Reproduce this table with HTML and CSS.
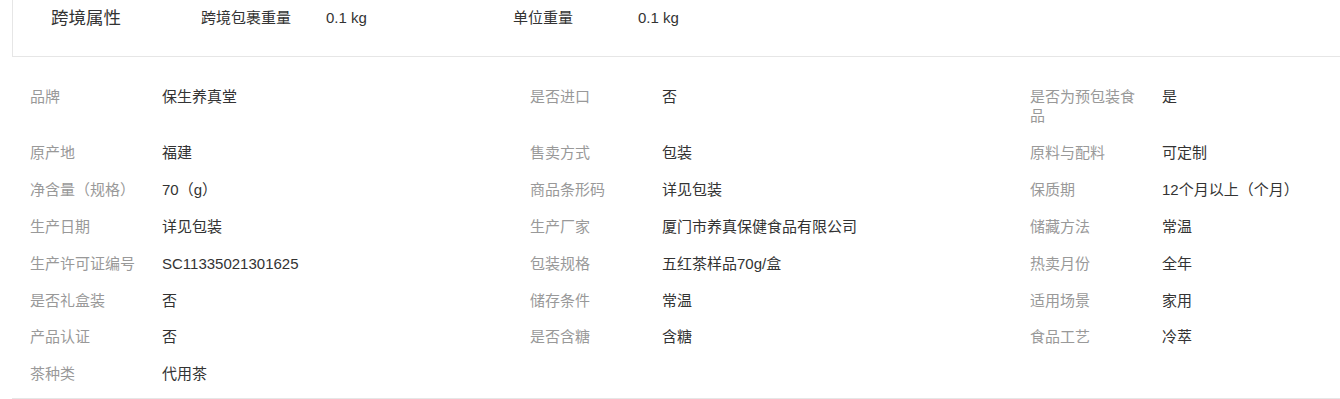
FILE: index.html
```html
<!DOCTYPE html>
<html lang="zh-CN">
<head>
<meta charset="utf-8">
<title>商品属性</title>
<link rel="stylesheet" href="styles.css">
</head>
<body>
<div class="page">
  <section class="cross">
    <div class="cross-title">跨境属性</div>
    <div class="cross-pair"><span class="cross-label">跨境包裹重量</span><span class="cross-value">0.1 kg</span></div>
    <div class="cross-pair"><span class="cross-label">单位重量</span><span class="cross-value">0.1 kg</span></div>
  </section>
  <section class="attrs">
    <div class="attr"><span class="label">品牌</span><span class="value">保生养真堂</span></div>
    <div class="attr"><span class="label">是否进口</span><span class="value">否</span></div>
    <div class="attr"><span class="label">是否为预包装食品</span><span class="value">是</span></div>

    <div class="attr"><span class="label">原产地</span><span class="value">福建</span></div>
    <div class="attr"><span class="label">售卖方式</span><span class="value">包装</span></div>
    <div class="attr"><span class="label">原料与配料</span><span class="value">可定制</span></div>

    <div class="attr"><span class="label">净含量（规格）</span><span class="value">70（g）</span></div>
    <div class="attr"><span class="label">商品条形码</span><span class="value">详见包装</span></div>
    <div class="attr"><span class="label">保质期</span><span class="value">12个月以上（个月）</span></div>

    <div class="attr"><span class="label">生产日期</span><span class="value">详见包装</span></div>
    <div class="attr"><span class="label">生产厂家</span><span class="value">厦门市养真保健食品有限公司</span></div>
    <div class="attr"><span class="label">储藏方法</span><span class="value">常温</span></div>

    <div class="attr"><span class="label">生产许可证编号</span><span class="value">SC11335021301625</span></div>
    <div class="attr"><span class="label">包装规格</span><span class="value">五红茶样品70g/盒</span></div>
    <div class="attr"><span class="label">热卖月份</span><span class="value">全年</span></div>

    <div class="attr"><span class="label">是否礼盒装</span><span class="value">否</span></div>
    <div class="attr"><span class="label">储存条件</span><span class="value">常温</span></div>
    <div class="attr"><span class="label">适用场景</span><span class="value">家用</span></div>

    <div class="attr"><span class="label">产品认证</span><span class="value">否</span></div>
    <div class="attr"><span class="label">是否含糖</span><span class="value">含糖</span></div>
    <div class="attr"><span class="label">食品工艺</span><span class="value">冷萃</span></div>

    <div class="attr"><span class="label">茶种类</span><span class="value">代用茶</span></div>
  </section>
</div>
</body>
</html>
```

FILE: styles.css
```css
html, body {
  margin: 0;
  padding: 0;
  background: #fff;
  overflow: hidden;
}

body {
  font-family: "Liberation Sans", "Noto Sans CJK SC", sans-serif;
  font-size: 15px;
  color: #333;
}

.page {
  margin-left: 12px;
}

.cross {
  display: flex;
  align-items: flex-start;
  height: 56px;
  border-left: 1px solid #e6e6e6;
  border-bottom: 1px solid #e6e6e6;
}

.cross-title {
  width: 150px;
  padding-left: 38px;
  padding-top: 6px;
  font-size: 17.5px;
  line-height: 24px;
  color: #333;
}

.cross-pair {
  display: flex;
  width: 312px;
  padding-top: 6px;
  line-height: 24px;
}

.cross-label {
  width: 125px;
  flex: none;
}

.cross-value {
  color: #333;
}

.attrs {
  display: grid;
  grid-template-columns: 500px 500px 1fr;
  margin-top: 21px;
  padding-left: 18px;
  padding-bottom: 5px;
  border-bottom: 1px solid #e6e6e6;
}

.attr {
  display: flex;
  align-items: flex-start;
  padding: 8.7px 0;
  line-height: 19.5px;
}

.label {
  flex: none;
  width: 112px;
  margin-right: 20px;
  color: #999;
}

.value {
  color: #333;
}
```
